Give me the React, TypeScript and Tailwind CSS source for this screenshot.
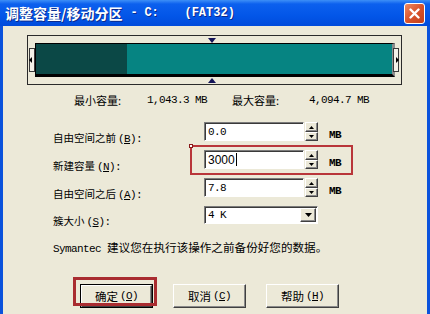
import React from "react";

const mono = "[font-family:'Liberation_Mono',monospace] text-[11px] tracking-[-0.6px]";
const sunken =
  "bg-white border border-t-[#7b7b7b] border-l-[#7b7b7b] border-b-white border-r-white shadow-[inset_1px_1px_#3a3a3a]";
const raised =
  "bg-[#ece9d8] border border-t-white border-l-white border-r-[#404040] border-b-[#404040] shadow-[inset_-1px_-1px_#8a8a8a]";

function Label({ text, k }: { text: string; k: string }) {
  return (
    <span className="text-[10.5px] leading-[12px] whitespace-nowrap">
      {text}
      <span className={mono + " ml-[2px] leading-[12px]"}>
        (<span className="underline">{k}</span>):
      </span>
    </span>
  );
}

function Spin() {
  return (
    <div className="flex flex-col w-[13px] h-[19px] ml-[1px]">
      <div className={raised + " h-[10px] flex items-center justify-center"}>
        <svg width="5" height="3" viewBox="0 0 5 3">
          <path d="M2.5 0L5 3H0z" fill="#000" />
        </svg>
      </div>
      <div className={raised + " h-[9px] flex items-center justify-center"}>
        <svg width="5" height="3" viewBox="0 0 5 3">
          <path d="M0 0h5L2.5 3z" fill="#000" />
        </svg>
      </div>
    </div>
  );
}

function Row({ text, k, value, caret }: { text: string; k: string; value: string; caret?: boolean }) {
  return (
    <div className="flex h-[19px]">
      <div className="w-[151px] pt-[7px] leading-[12px]">
        <Label text={text} k={k} />
      </div>
      <div className={sunken + " w-[100px] h-[19px] flex items-center pl-[3px]"}>
        {caret ? (
          <span className="[font-family:'Liberation_Sans',sans-serif] text-[12px] leading-[14px] flex items-center">
            {value}
            <span className="inline-block w-[1px] h-[13px] bg-black ml-[1px]" />
          </span>
        ) : (
          <span className={mono + " leading-[14px]"}>{value}</span>
        )}
      </div>
      <Spin />
      <span className={mono + " ml-[11px] pt-[7px] leading-[12px] font-bold h-[19px]"}>MB</span>
    </div>
  );
}

function Handle({ right }: { right?: boolean }) {
  return (
    <div
      className={
        "relative w-[6px] h-[24px] border border-[#3a3a3a] bg-[#f3f1e8] " + (right ? "-ml-[2px]" : "")
      }
    >
      {right ? (
        <span className="absolute right-[-1px] top-[8px] w-0 h-0 border-y-[3px] border-y-transparent border-l-[3px] border-l-black" />
      ) : (
        <span className="absolute left-[-1px] top-[8px] w-0 h-0 border-y-[3px] border-y-transparent border-r-[3px] border-r-black" />
      )}
    </div>
  );
}

function Btn({ text, k, def }: { text: string; k: string; def?: boolean }) {
  return (
    <div className={"w-[73px] h-[24px] " + (def ? "border border-black" : "")}>
      <div
        className={
          raised + " w-full h-full flex items-center justify-center text-[11.5px] leading-[12px]"
        }
      >
        {text}
        <span className={mono + " ml-[2px]"}>
          (<span className="underline">{k}</span>)
        </span>
      </div>
    </div>
  );
}

export default function App() {
  return (
    <div className="w-[430px] h-[314px] overflow-hidden bg-[#0a52dc] flex flex-col [font-family:'Noto_Sans_CJK_SC',sans-serif] text-black">
      {/* title bar */}
      <div className="h-[26px] shrink-0 flex items-center pl-[5px] pr-[5px] bg-[linear-gradient(to_bottom,#3d8ff7_0px,#0c60ee_4px,#0356e8_60%,#004bdb_100%)] text-white font-bold [text-shadow:1px_1px_#0b2a8c]">
        <span className="text-[14px] leading-[15px] whitespace-nowrap">调整容量/移动分区</span>
        <span className="[font-family:'Liberation_Mono',monospace] text-[12px] tracking-[-0.2px] ml-[8px] whitespace-nowrap">
          - C:
        </span>
        <span className="[font-family:'Liberation_Mono',monospace] text-[12px] tracking-[0px] ml-[26px] whitespace-nowrap">
          (FAT32)
        </span>
        <div className="ml-auto w-[21px] h-[21px] rounded-[3px] border border-white bg-[linear-gradient(135deg,#ee8a62,#d8532c_50%,#c2401c)] flex items-center justify-center">
          <svg width="11" height="11" viewBox="0 0 11 11">
            <path d="M1.5 1.5l8 8M9.5 1.5l-8 8" stroke="#fff" strokeWidth="2.4" strokeLinecap="round" />
          </svg>
        </div>
      </div>

      {/* body */}
      <div className="relative flex-1 mx-[3px] bg-[#ece9d8] flex flex-col">
        {/* partition graphic */}
        <div className="relative ml-[24px] mt-[9px] w-[375px] h-[50px] border border-[#2a2a2a] flex items-center pl-[1px]">
          <span className="absolute left-[180px] top-[2px] w-0 h-0 border-x-[4px] border-x-transparent border-t-[5px] border-t-[#141458]" />
          <span className="absolute left-[180px] top-[42px] w-0 h-0 border-x-[4px] border-x-transparent border-b-[5px] border-b-[#141458]" />
          <Handle />
          <div className="w-[360px] h-[34px] border-t border-l border-black border-b-[3px] border-r-[3px] border-r-[#8c8c8c] flex">
            <div className="w-[91px] bg-[#0b4846]" />
            <div className="flex-1 bg-[#068482]" />
          </div>
          <Handle right />
        </div>

        {/* min / max */}
        <div className="flex mt-[9px] pl-[71px] leading-[12px] text-[11px]">
          <span className="w-[73px]">最小容量:</span>
          <span className={mono + " w-[85px] leading-[12px]"}>1,043.3 MB</span>
          <span className="w-[77px]">最大容量:</span>
          <span className={mono + " leading-[12px]"}>4,094.7 MB</span>
        </div>

        {/* form */}
        <div className="flex flex-col gap-[9px] mt-[16px] pl-[50px]">
          <Row text="自由空间之前" k="B" value="0.0" />
          <Row text="新建容量" k="N" value="3000" caret />
          <Row text="自由空间之后" k="A" value="7.8" />
          <div className="flex h-[18px]">
            <div className="w-[151px] pt-[6px] leading-[12px]">
              <Label text="簇大小" k="S" />
            </div>
            <div className={sunken + " w-[114px] h-[18px] flex items-center pl-[3px] pr-[1px]"}>
              <span className={mono + " leading-[14px] flex-1"}>4 K</span>
              <div className={raised + " w-[16px] h-[14px] flex items-center justify-center"}>
                <svg width="7" height="4" viewBox="0 0 7 4">
                  <path d="M0 0h7L3.5 4z" fill="#000" />
                </svg>
              </div>
            </div>
          </div>
        </div>

        {/* note */}
        <div className="mt-[15px] pl-[50px] leading-[12px] whitespace-nowrap">
          <span className={mono + " leading-[12px]"}>Symantec</span>
          <span className="text-[11.6px] ml-[6px]">建议您在执行该操作之前备份好您的数据。</span>
        </div>

        {/* buttons */}
        <div className="flex gap-[20px] mt-[29px] pl-[77px]">
          <Btn text="确定" k="O" def />
          <Btn text="取消" k="C" />
          <Btn text="帮助" k="H" />
        </div>

        {/* annotation boxes */}
        <div className="absolute left-[187px] top-[119px] w-[163px] h-[30px] border-2 border-[#b9363a]">
          <span className="absolute left-[-3px] top-[-3px] w-[4px] h-[4px] bg-white border border-[#8a1a1a]" />
        </div>
        <div className="absolute left-[70px] top-[251px] w-[84px] h-[29px] border-[3px] border-[#a92c30]" />
      </div>
    </div>
  );
}
